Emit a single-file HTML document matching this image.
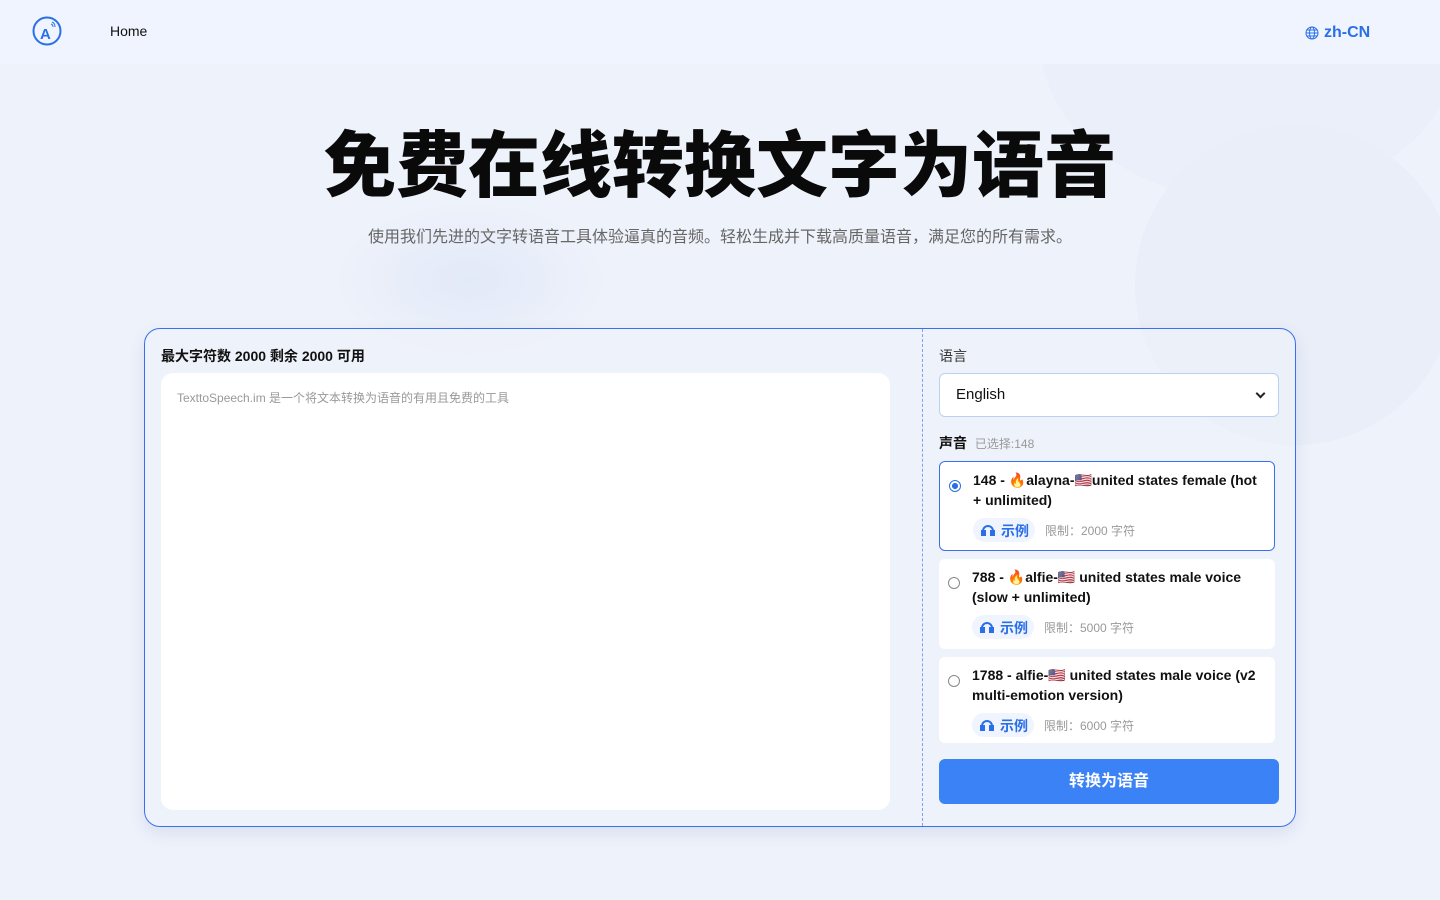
<!DOCTYPE html>
<html><head><meta charset="utf-8"><style>
*{box-sizing:border-box;margin:0;padding:0}
body{width:1440px;height:900px;overflow:hidden;background:#eef2fa;font-family:"Liberation Sans","Noto Sans CJK SC",sans-serif;position:relative;color:#111}
.hdr{position:absolute;left:0;top:0;width:1440px;height:64px;background:#eff4fe}
.bg1{position:absolute;left:1040px;top:-120px;width:420px;height:320px;border-radius:50%;background:#eaeff9}
.bg2{position:absolute;left:1135px;top:125px;width:320px;height:320px;border-radius:50%;background:#e9eef8}
.bg3{position:absolute;left:330px;top:200px;width:280px;height:160px;border-radius:50%;background:radial-gradient(#e2e9f8,transparent 70%)}
h1{position:absolute;top:107px;left:0;width:1440px;text-align:center;font-size:72px;font-weight:900;color:#0a0a0a}
.sub{position:absolute;top:223px;width:1440px;text-align:center;font-size:16px;color:#666}
.card{position:absolute;left:144px;top:328px;width:1152px;height:499px;border:1px solid #3b6ff0;border-radius:16px;background:rgba(238,242,250,.6);box-shadow:0 6px 16px rgba(60,90,160,.12)}
.div{position:absolute;left:777px;top:0;height:497px;border-left:1px dashed #7da0f0}
.lab{position:absolute;font-size:14px;font-weight:bold}
.ta{position:absolute;left:16px;top:44px;width:729px;height:437px;background:#fff;border-radius:12px;font-size:12px;color:#999;padding:16px}
.sel{position:absolute;left:794px;top:44px;width:340px;height:44px;background:#fff;border:1px solid #bcd0f5;border-radius:6px;font-size:15px;padding:12px 16px}
.sel:after{content:"";position:absolute;right:14px;top:16px;width:5px;height:5px;border-right:2px solid #222;border-bottom:2px solid #222;transform:rotate(45deg)}
.v{position:absolute;left:794px;width:336px;height:90px;background:#fff;border-radius:6px;overflow:hidden}
.v.s{border:1px solid #3b6ff0}
.rad{position:absolute;left:9px;top:18px;width:12px;height:12px;border:1px solid #888;border-radius:50%}
.s .rad{border:1px solid #2a6fe8;background:radial-gradient(#2a6fe8 40%,#fff 45%)}
.vt{position:absolute;left:33px;top:8px;width:295px;font-size:14px;font-weight:bold;line-height:20px}
.ex{position:absolute;left:33px;top:56px;height:24px;width:62px;background:#eff4fe;border-radius:12px;color:#2a6fe8;font-size:14px;font-weight:bold;padding:3px 0 0 28px}
.ex svg{position:absolute;left:8px;top:6px}
.lim{position:absolute;left:105px;top:60px;font-size:12px;color:#999}
.btn{position:absolute;left:794px;top:430px;width:340px;height:45px;background:#3b82f6;border-radius:6px;color:#fff;font-size:16px;font-weight:bold;text-align:center;line-height:45px}
</style></head><body>
<div class="bg1"></div><div class="bg2"></div><div class="bg3"></div>
<div class="hdr">
<svg style="position:absolute;left:32px;top:16px" width="30" height="30" viewBox="0 0 30 30"><circle cx="15" cy="15" r="13.5" fill="none" stroke="#2a6fe8" stroke-width="2"/><text x="8" y="23" font-size="15" font-weight="bold" fill="#2a6fe8" font-family="Liberation Sans">A</text><path d="M19 8a3 3 0 0 1 2 3M20 6a5 5 0 0 1 3 5" stroke="#2a6fe8" fill="none"/></svg>
<div style="position:absolute;left:110px;top:23px;font-size:14px">Home</div>
<svg style="position:absolute;left:1305px;top:26px" width="14" height="14" viewBox="0 0 14 14" fill="none" stroke="#2a6fe8"><circle cx="7" cy="7" r="6"/><ellipse cx="7" cy="7" rx="2.5" ry="6"/><path d="M1 7h12M2 4h10M2 10h10"/></svg>
<div style="position:absolute;left:1324px;top:24px;font-size:16px;font-weight:bold;color:#2a6fe8">zh-CN</div>
</div>
<h1>免费在线转换文字为语音</h1>
<div class="sub">使用我们先进的文字转语音工具体验逼真的音频。轻松生成并下载高质量语音，满足您的所有需求。</div>
<div class="card">
<div class="div"></div>
<div class="lab" style="left:16px;top:17px">最大字符数 2000 剩余 2000 可用</div>
<div class="ta">TexttoSpeech.im 是一个将文本转换为语音的有用且免费的工具</div>
<div class="lab" style="left:794px;top:17px;font-weight:normal;color:#333">语言</div>
<div class="sel">English</div>
<div class="lab" style="left:794px;top:104px">声音 <span style="font-size:12px;color:#999;font-weight:normal;margin-left:4px">已选择:148</span></div>
<div class="v s" style="top:132px;height:90px"><div class="rad"></div><div class="vt">148 - 🔥alayna-🇺🇸united states female (hot + unlimited)</div><div class="ex"><svg width="14" height="12" viewBox="0 0 14 12" fill="none" stroke="#2a6fe8" stroke-width="2"><path d="M2 10V7a5 5 0 0 1 10 0v3"/><rect x="1" y="7" width="3" height="4" fill="#2a6fe8"/><rect x="10" y="7" width="3" height="4" fill="#2a6fe8"/></svg>示例</div><div class="lim">限制：2000 字符</div></div>
<div class="v" style="top:230px"><div class="rad"></div><div class="vt">788 - 🔥alfie-🇺🇸 united states male voice (slow + unlimited)</div><div class="ex"><svg width="14" height="12" viewBox="0 0 14 12" fill="none" stroke="#2a6fe8" stroke-width="2"><path d="M2 10V7a5 5 0 0 1 10 0v3"/><rect x="1" y="7" width="3" height="4" fill="#2a6fe8"/><rect x="10" y="7" width="3" height="4" fill="#2a6fe8"/></svg>示例</div><div class="lim">限制：5000 字符</div></div>
<div class="v" style="top:328px;height:86px"><div class="rad"></div><div class="vt">1788 - alfie-🇺🇸 united states male voice (v2 multi-emotion version)</div><div class="ex"><svg width="14" height="12" viewBox="0 0 14 12" fill="none" stroke="#2a6fe8" stroke-width="2"><path d="M2 10V7a5 5 0 0 1 10 0v3"/><rect x="1" y="7" width="3" height="4" fill="#2a6fe8"/><rect x="10" y="7" width="3" height="4" fill="#2a6fe8"/></svg>示例</div><div class="lim">限制：6000 字符</div></div>
<div class="btn">转换为语音</div>
</div>
</body></html>
